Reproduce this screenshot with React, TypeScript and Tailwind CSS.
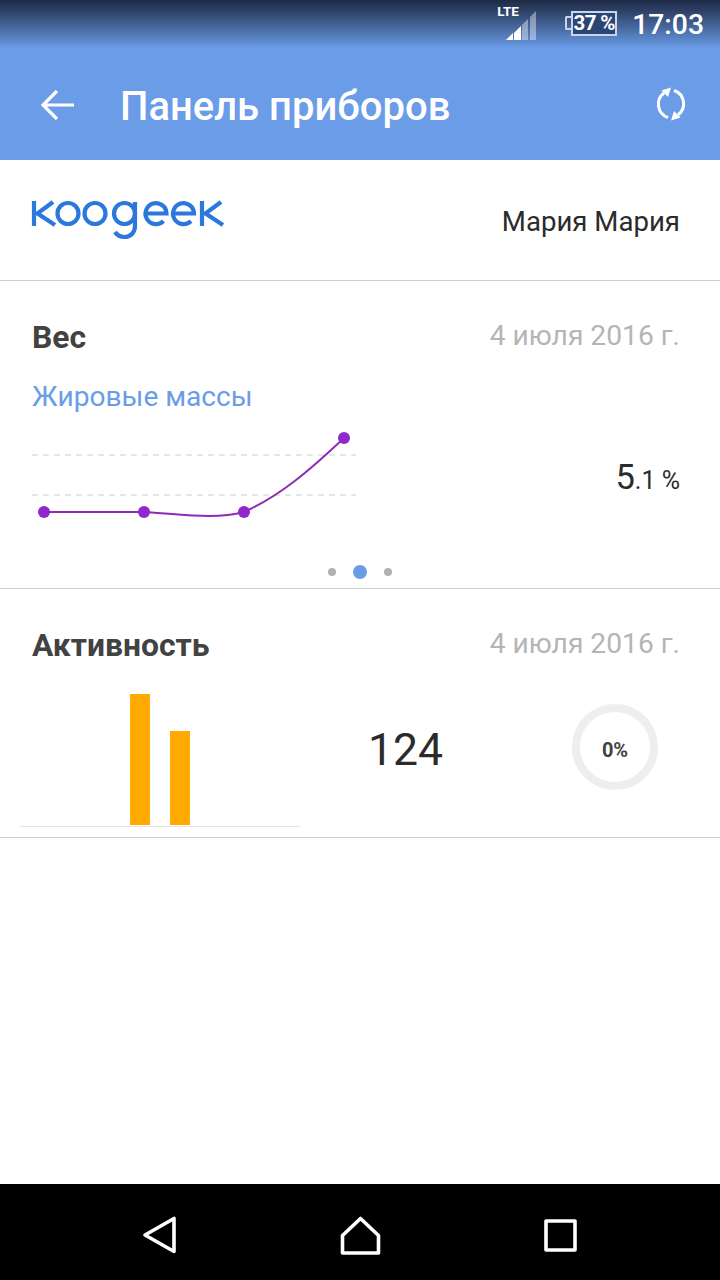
const roboto = { fontFamily: 'Roboto, "Noto Sans", sans-serif' };

function Signal() {
  return (
    <svg width="30" height="32" viewBox="0 0 30 32" className="block">
      <polygon points="0,32 7,25 7,32" fill="#fff" />
      <polygon points="8,32 8,25 15,18 15,32" fill="#fff" />
      <polygon points="16,32 16,17 22,11 22,32" fill="#fff" fillOpacity="0.4" />
      <polygon points="24,32 24,9 30,3 30,32" fill="#fff" fillOpacity="0.4" />
    </svg>
  );
}

function LogoE({ cx }: { cx: number }) {
  return <path d={`M${cx - 10.5} 14.5H${cx + 10.5}A10.500 10.500 0 1 0 ${cx + 7.5} 22`} />;
}

function LogoK({ x }: { x: number }) {
  return <path d={`M${x} 2V27M${x} 14.5H${x + 3.5}L${x + 19} 3M${x + 3.5} 14.5L${x + 21} 26`} />;
}

function Logo() {
  return (
    <svg width="196" height="42" viewBox="0 0 196 42" fill="none" stroke="#2a78dc" strokeWidth="4.2" className="block">
      <LogoK x={4} />
      <circle cx="38" cy="14.5" r="10.5" />
      <circle cx="65" cy="14.5" r="10.5" />
      <circle cx="94.500" cy="14.5" r="10.5" />
      <path d="M105 3V27C105 34 100 38 94.500 38C90.500 38 87 36 85 33" />
      <LogoE cx={126} />
      <LogoE cx={153.5} />
      <LogoK x={172} />
    </svg>
  );
}

function Chart() {
  return (
    <svg width="340" height="110" viewBox="0 0 340 110" fill="none" className="block">
      <line x1="12" y1="35" x2="336" y2="35" stroke="#d5e3dc" strokeWidth="1.5" strokeDasharray="6 5" />
      <line x1="12" y1="75" x2="336" y2="75" stroke="#d5e3dc" strokeWidth="1.5" strokeDasharray="6 5" />
      <path d="M24 92L124 92C160 94 195 100 224 92C260 76 290 50 324 18" stroke="#8e2cb5" strokeWidth="2" />
      <circle cx="24" cy="92" r="6" fill="#9128cc" />
      <circle cx="124" cy="92" r="6" fill="#9128cc" />
      <circle cx="224" cy="92" r="6" fill="#9128cc" />
      <circle cx="324" cy="18" r="6" fill="#9128cc" />
    </svg>
  );
}

function CardHeader({ title }: { title: string }) {
  return (
    <div className="flex h-[40px] items-start justify-between">
      <span className="mt-[1px] text-[31.8px] font-bold leading-[40px] text-[#424242]">{title}</span>
      <span className="text-[28.2px] leading-[40px] text-[#b5b5b5]">4 июля 2016 г.</span>
    </div>
  );
}

export default function App() {
  return (
    <div className="flex h-[1280px] w-[720px] flex-col overflow-hidden bg-white" style={roboto}>
      <header className="h-[160px] shrink-0 bg-[#6a9ce8]">
        <div className="flex h-[48px] items-start justify-end bg-gradient-to-b from-[#1d2a45] to-[#6a9ce8] pr-4">
          <div className="relative mr-[29px] h-[40px] w-[30px]">
            <span className="absolute left-[-9px] top-[3px] text-[13.5px] font-bold leading-[16px] text-white">LTE</span>
            <div className="absolute left-0 top-[8px]">
              <Signal />
            </div>
          </div>
          <div className="mr-[15px] mt-[11px] flex h-[24px] items-center">
            <span className="h-[14px] w-[6px] rounded-l-[2px] border-y-2 border-l-2 border-[#c7d6ee]" />
            <span className="flex h-[25px] w-[46px] items-center justify-center whitespace-nowrap border-2 border-[#c7d6ee] bg-[#2c4674] text-[20.5px] font-bold leading-none tracking-[-0.6px] text-white">
              37 %
            </span>
          </div>
          <span className="mt-[8px] text-[28.3px] font-medium leading-[34px] text-white">17:03</span>
        </div>
        <div className="flex h-[112px] items-center justify-between pl-[40px] pr-[32px]">
          <div className="flex items-center">
            <svg width="34" height="32" viewBox="0 0 34 32" fill="none" stroke="#fff" strokeWidth="3.2" className="mt-[2px] block">
              <path d="M34 16H3M17 2L3 16L17 30" />
            </svg>
            <h1 className="ml-[46px] mt-[5px] text-[40px] font-medium leading-[48px] text-white">Панель приборов</h1>
          </div>
          <svg width="34" height="34" viewBox="0 0 34 34" fill="none" stroke="#fff" strokeWidth="3" className="block">
            <path d="M10 6A14 14 0 0 0 14 30.500" />
            <path d="M24 28A14 14 0 0 0 20 3.500" />
            <polygon points="17,0.500 7.500,3.500 14,10" fill="#fff" stroke="none" />
            <polygon points="17,33.500 26.500,30.500 20,24" fill="#fff" stroke="none" />
          </svg>
        </div>
      </header>

      <section className="flex h-[121px] shrink-0 items-center justify-between border-b border-[#cfcfcf] pl-[30px] pr-[40px]">
        <Logo />
        <span className="mt-[3px] text-[27.6px] leading-[36px] text-[#2b2b2b]">Мария Мария</span>
      </section>

      <section className="h-[308px] shrink-0 border-b border-[#cfcfcf] pl-[32px] pr-[40px] pt-[35px]">
        <CardHeader title="Вес" />
        <p className="mt-[21px] text-[28.1px] leading-[40px] text-[#6a9ce8]">Жировые массы</p>
        <div className="ml-[-12px] mt-[3px] flex items-start justify-between">
          <Chart />
          <div className="mt-[35px] text-[#2b2b2b]">
            <span className="text-[34.5px] leading-[44px]">5</span>
            <span className="text-[25px] leading-[44px]">.1 %</span>
          </div>
        </div>
        <div className="ml-[-32px] mt-[35px] flex w-[720px] items-center justify-center gap-[17px]">
          <span className="size-[8px] rounded-full bg-[#b2b2b2]" />
          <span className="size-[14px] rounded-full bg-[#6a9ce8]" />
          <span className="size-[8px] rounded-full bg-[#b2b2b2]" />
        </div>
      </section>

      <section className="h-[249px] shrink-0 border-b border-[#cfcfcf] pl-[32px] pr-[40px] pt-[35px]">
        <CardHeader title="Активность" />
        <div className="ml-[-12px] mt-[30px] flex items-center">
          <div className="flex h-[133px] w-[280px] items-end justify-center gap-[20px] border-b border-[#e3e6e8] pb-[1px]">
            <span className="h-[131px] w-[20px] bg-[#ffaa00]" />
            <span className="h-[94px] w-[20px] bg-[#ffaa00]" />
          </div>
          <span className="ml-[68px] mt-[-22px] text-[44.5px] leading-[56px] text-[#2b2b2b]">124</span>
          <div className="ml-[129px] mt-[-28px] flex size-[86px] items-center justify-center rounded-full border-[8px] border-[#eeeeee]">
            <span className="mt-[7px] text-[20px] font-bold leading-none text-[#424242]">0%</span>
          </div>
        </div>
      </section>

      <div className="flex-1" />

      <nav className="flex h-[96px] shrink-0 items-center bg-black pt-[6px]">
        <svg width="35" height="38" viewBox="0 0 35 38" fill="none" stroke="#fff" strokeWidth="3.6" strokeLinejoin="round" className="ml-[142px] block">
          <polygon points="32,2.500 32,35.500 3,19" />
        </svg>
        <svg width="41" height="39" viewBox="0 0 41 39" fill="none" stroke="#fff" strokeWidth="3.6" strokeLinejoin="round" className="ml-[163px] block">
          <polygon points="20.500,2.500 38.500,19.500 38.500,37 2.500,37 2.500,19.500" />
        </svg>
        <svg width="33" height="33" viewBox="0 0 33 33" fill="none" stroke="#fff" strokeWidth="3.6" strokeLinejoin="round" className="ml-[163px] block">
          <rect x="2" y="2" width="29" height="29" />
        </svg>
      </nav>
    </div>
  );
}
